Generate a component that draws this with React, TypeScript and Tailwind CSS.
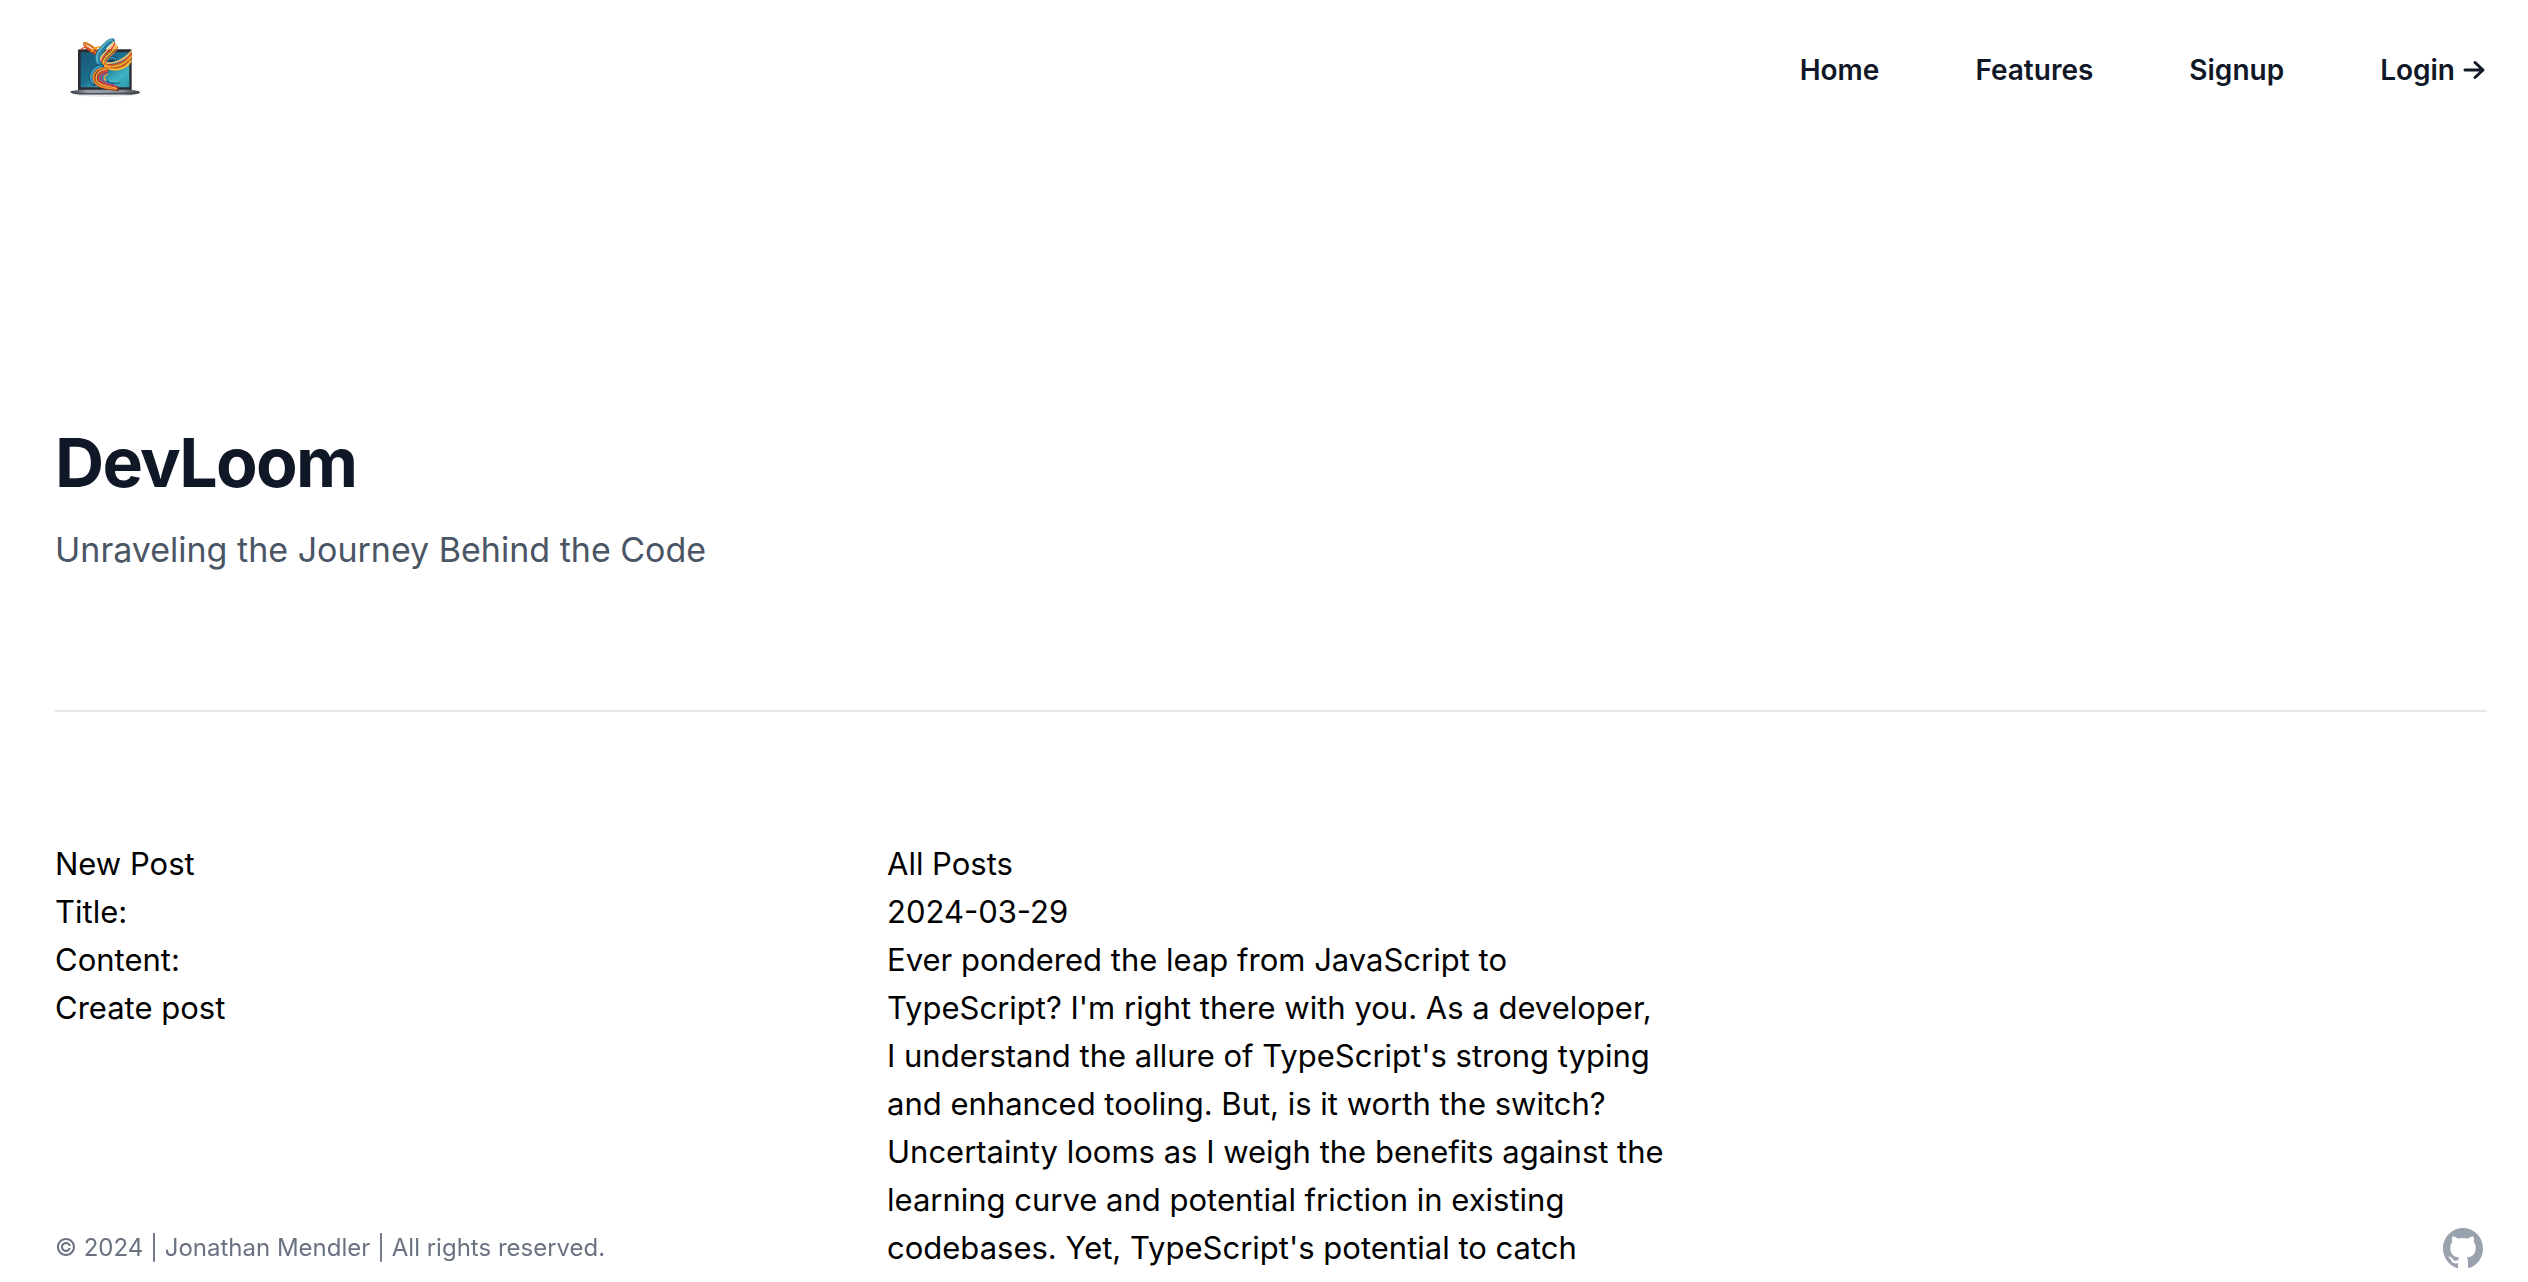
import React from "react";

const navLinks = ["Home", "Features", "Signup"];

function Logo({ className }: { className: string }) {
  return (
    <svg viewBox="60 52 210 180" className={className} aria-hidden="true">
      <defs>
        <linearGradient id="screen" x1="0" y1="0" x2="1" y2="1">
          <stop offset="0" stopColor="#1a5675" />
          <stop offset="0.45" stopColor="#1b6f8e" />
          <stop offset="0.75" stopColor="#3fb3c2" />
          <stop offset="1" stopColor="#2b95ac" />
        </linearGradient>
        <linearGradient id="base" x1="0" y1="0" x2="1" y2="0">
          <stop offset="0" stopColor="#3c4048" />
          <stop offset="0.25" stopColor="#9ba1aa" />
          <stop offset="0.75" stopColor="#8b9099" />
          <stop offset="1" stopColor="#34373f" />
        </linearGradient>
      </defs>
      <ellipse cx="165" cy="221" rx="92" ry="7" fill="#e6e6ea" />
      <path d="M84 90q0-4 4-4h153q4 0 4 4v118H84z" fill="#2c2b33" />
      <path d="M92 95h146v105H92z" fill="url(#screen)" />
      <path d="M61 215q0-4 8-5l20-3h155l20 4q6 2 6 5-8 6-40 6H105q-38 0-44-7z" fill="url(#base)" />
      <path d="M61 215q50 4 209 0-8 6-40 6H105q-38 0-44-7z" fill="#4a4c56" />
      <g fill="none" strokeLinecap="round">
        {/* left loop */}
        <path d="M148 112C136 98 118 92 108 80C100 70 101 65 108 68C122 72 136 86 150 98" stroke="#a93a22" strokeWidth="6" />
        <path d="M150 106C138 92 122 88 110 78C102 71 101 66 107 67C122 71 138 84 152 96" stroke="#f08a28" strokeWidth="5" />
        <path d="M93 86C100 78 112 80 122 88C132 92 142 100 148 108" stroke="#e9512a" strokeWidth="4" />
        <path d="M124 92C134 80 146 77 160 80" stroke="#f5a11f" strokeWidth="5" />
        {/* lower teal coil */}
        <path d="M168 119C180 104 198 108 198 118C191 123 184 118 176 124" stroke="#15405c" strokeWidth="7" />
        <path d="M167 120C180 106 195 108 197 118" stroke="#32a2bd" strokeWidth="4" />
        <path d="M132 190C116 170 122 145 148 135C158 130 172 132 184 136" stroke="#1b5878" strokeWidth="14" />
        <path d="M130 186C116 164 128 144 152 137" stroke="#3b9dba" strokeWidth="9" />
        {/* blue strands of the upper sweep */}
        <path d="M150 128C132 108 148 92 162 78C170 68 178 60 187 60" stroke="#196c91" strokeWidth="15" />
        <path d="M144 126C132 104 150 89 162 74C170 64 178 57 186 58" stroke="#5bb0c4" strokeWidth="6" />
        <path d="M150 128C138 108 156 94 169 80C177 70 182 64 189 62" stroke="#2b86a8" strokeWidth="5" />
        {/* warm strands running from the top round to the right edge */}
        <path d="M168 138C198 146 224 132 241 108V122C226 142 204 148 180 147Z" fill="#8a3a20" />
        <path d="M190 64C184 84 144 106 154 120C168 134 218 128 244 92" stroke="#f4c071" strokeWidth="5" />
        <path d="M194 68C190 88 150 110 156 124C172 140 218 136 244 99" stroke="#df4c24" strokeWidth="5" />
        <path d="M199 74C194 92 156 112 160 128C176 146 220 140 244 106" stroke="#f8b02a" strokeWidth="5" />
        <path d="M203 79C198 96 162 116 164 132C178 152 220 148 243 114" stroke="#e8701f" strokeWidth="4" />
        <path d="M164 136C186 156 226 148 243 121" stroke="#ffc338" strokeWidth="5" />
        {/* bottom bundle */}
        <path d="M168 148C136 146 128 170 142 186C156 200 178 198 200 204" stroke="#7a2a2a" strokeWidth="15" />
        <path d="M170 142C134 142 124 166 135 184C146 202 172 202 198 206" stroke="#f08a22" strokeWidth="5" />
        <path d="M172 147C142 147 132 168 143 184C154 198 178 196 200 203" stroke="#f8b44c" strokeWidth="4" />
        <path d="M172 152C148 153 140 170 150 182C160 194 180 192 200 199" stroke="#e2412f" strokeWidth="5" />
        <path d="M170 158C154 161 150 172 158 180C166 188 180 188 192 193" stroke="#a8397a" strokeWidth="4" />
        <path d="M172 161C160 167 160 174 168 180" stroke="#f5a030" strokeWidth="4" />
        <path d="M172 180C184 190 194 184 208 186" stroke="#167997" strokeWidth="8" />
        <path d="M176 178C186 186 196 181 208 184" stroke="#69d1d5" strokeWidth="3" />
      </g>
    </svg>
  );
}

function GithubIcon() {
  return (
    <svg viewBox="0 0 24 24" fill="currentColor" className="size-10" aria-hidden="true">
      <path
        fillRule="evenodd"
        clipRule="evenodd"
        d="M12 0C5.37 0 0 5.5 0 12.3c0 5.43 3.44 10.03 8.2 11.66.6.11.82-.26.82-.59v-2.3c-3.34.75-4.04-1.43-4.04-1.43-.55-1.42-1.34-1.8-1.34-1.8-1.09-.76.08-.75.08-.75 1.21.09 1.84 1.27 1.84 1.27 1.07 1.88 2.81 1.34 3.5 1.02.1-.8.42-1.34.76-1.64-2.67-.31-5.47-1.37-5.47-6.08 0-1.34.47-2.44 1.24-3.3-.13-.31-.54-1.56.11-3.25 0 0 1.01-.33 3.3 1.26a11.2 11.2 0 0 1 6 0c2.3-1.59 3.3-1.26 3.3-1.26.66 1.69.25 2.94.12 3.25.77.86 1.24 1.96 1.24 3.3 0 4.72-2.81 5.76-5.49 6.07.43.38.82 1.13.82 2.27v3.37c0 .33.22.71.83.59A12.3 12.3 0 0 0 24 12.3C24 5.5 18.63 0 12 0z"
      />
    </svg>
  );
}

export default function App() {
  return (
    <div className="h-screen overflow-hidden bg-white pr-[41px] pl-[55px] font-['Inter','Liberation_Sans',sans-serif] text-[31px] leading-[48px] text-black">
      <header className="flex h-[140px] items-center justify-between pl-[15px]">
        <a href="#" aria-label="DevLoom" className="-mt-1">
          <Logo className="h-[60px] w-[70px]" />
        </a>
        <nav className="flex gap-24 text-[28px] font-semibold text-gray-900">
          {navLinks.map((label) => (
            <a key={label} href="#">
              {label}
            </a>
          ))}
          <a href="#" className="flex items-center gap-2">
            Login
            <svg viewBox="0 0 24 24" className="size-6" fill="none" stroke="currentColor" strokeWidth="3" strokeLinecap="round" strokeLinejoin="round" aria-hidden="true">
              <path d="M2 12H20M12 4.500 20 12l-8 7.500" />
            </svg>
          </a>
        </nav>
      </header>

      <main className="pt-[282px]">
        <div>
          <h1 className="text-[68px] leading-[80px] font-bold tracking-tight text-gray-900">DevLoom</h1>
          <p className="mt-4 text-[34px] leading-[64px] text-gray-600">Unraveling the Journey Behind the Code</p>
        </div>

        <div className="mt-32 grid grid-cols-3 gap-16 border-t-2 border-gray-200 pt-32">
          <section>
            <h2>New Post</h2>
            <form onSubmit={(e) => e.preventDefault()}>
              <div className="flex gap-2">
                <label htmlFor="title">Title:</label>
                <input id="title" type="text" className="min-w-0 flex-1 bg-transparent outline-none" />
              </div>
              <div className="flex gap-2">
                <label htmlFor="content">Content:</label>
                <textarea id="content" rows={1} className="min-w-0 flex-1 resize-none overflow-hidden bg-transparent outline-none" />
              </div>
              <button type="submit">Create post</button>
            </form>
          </section>
          <section>
            <h2>All Posts</h2>
            <article>
              <time dateTime="2024-03-29" className="block">
                2024-03-29
              </time>
              <p>
                Ever pondered the leap from JavaScript to TypeScript? I'm right there with you. As a developer, I
                understand the allure of TypeScript's strong typing and enhanced tooling. But, is it worth the switch?{" "}
                <span className="whitespace-nowrap">Uncertainty looms as I weigh the benefits against the</span>{" "}
                learning curve and potential friction in existing codebases. Yet, TypeScript's potential to catch
              </p>
            </article>
          </section>
        </div>
      </main>

      <footer className="fixed inset-x-0 bottom-0 flex items-center justify-between pr-[45px] pb-[14px] pl-[55px]">
        <p className="text-[24px] leading-[40px] text-gray-500">
          &copy; 2024 | Jonathan Mendler | All rights reserved.
        </p>
        <a href="#" aria-label="GitHub" className="text-gray-400">
          <GithubIcon />
        </a>
      </footer>
    </div>
  );
}
